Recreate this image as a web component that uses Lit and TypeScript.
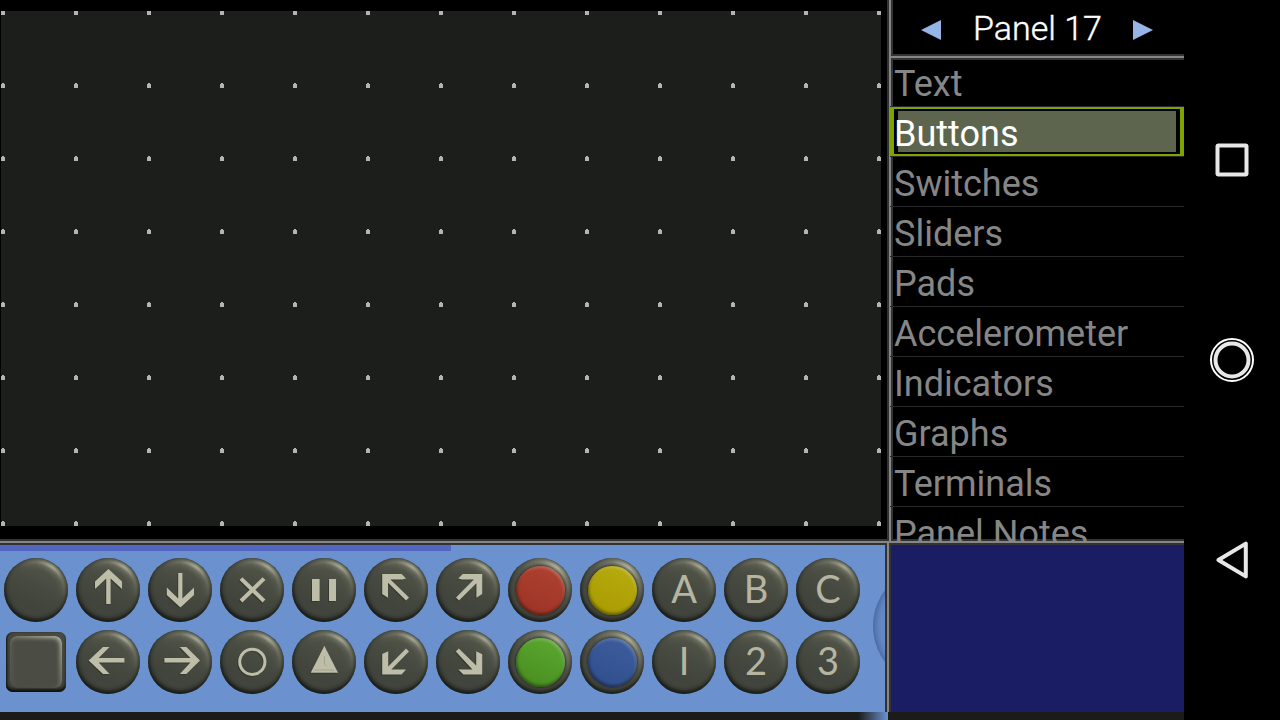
import { LitElement, html, svg, css } from "lit";
import { customElement, property, state } from "lit/decorators.js";
import { classMap } from "lit/directives/class-map.js";

interface Pad {
  id: string;
  kind: "blank" | "square" | "icon" | "lens" | "letter";
  glyph?: string;
}

const PADS: Pad[] = [
  { id: "Blank", kind: "blank" },
  { id: "Up", kind: "icon" },
  { id: "Down", kind: "icon" },
  { id: "Cross", kind: "icon" },
  { id: "Pause", kind: "icon" },
  { id: "Up left", kind: "icon" },
  { id: "Up right", kind: "icon" },
  { id: "red", kind: "lens" },
  { id: "yellow", kind: "lens" },
  { id: "Letter A", kind: "letter", glyph: "A" },
  { id: "Letter B", kind: "letter", glyph: "B" },
  { id: "Letter C", kind: "letter", glyph: "C" },
  { id: "Square", kind: "square" },
  { id: "Left", kind: "icon" },
  { id: "Right", kind: "icon" },
  { id: "Circle", kind: "icon" },
  { id: "Triangle", kind: "icon" },
  { id: "Down left", kind: "icon" },
  { id: "Down right", kind: "icon" },
  { id: "green", kind: "lens" },
  { id: "blue", kind: "lens" },
  { id: "Number 1", kind: "letter", glyph: "I" },
  { id: "Number 2", kind: "letter", glyph: "2" },
  { id: "Number 3", kind: "letter", glyph: "3" },
];

const ICONS: Record<string, unknown> = {
  Up: svg`<path d="M32.4 11 46 23.6V31l-11.4-10.4V46h-4.4V20.6L19 31v-7.4z"/>`,
  Down: svg`<path d="M32.4 49.4 46 37v-7.4L34.4 40.4V15h-4.2v25.4L18.8 29.6V37z"/>`,
  Left: svg`<path d="M12.6 30.4 27 17h6.6L22.6 28h25.8v4.6H22.6l11 11.4H27z"/>`,
  Right: svg`<path d="M52 30.6 38.4 17h-6.6l10.6 11H16.4v4.6h26L31.8 44h6.6z"/>`,
  Cross: svg`<path class="line" d="M21 20.6 44 43M44 20.6 21 43"/>`,
  Circle: svg`<circle class="ring" cx="32.3" cy="31.8" r="12.6"/>`,
  Pause: svg`<path d="M20 21h7.6v22H20zM37 21h7v22h-7z"/>`,
  Triangle: svg`<path d="M32.3 15.8 46 42.8H18.7z"/><path class="facet" d="M32.4 26v8.4l2.4 1.6M22 40h20"/>`,
  "Up left": svg`<path d="M18.2 16H37.6l4.4 4.4-3.4 1.2H26.4L45 39.4l-3 3L24 24.8V39.8L18.2 36z"/>`,
  "Up right": svg`<path d="M46.2 16H26.8l-4.6 4.4 3.4 1.2H37.8L20 39.4l3 3 17.4-17.2V39.8l5.8-3.8z"/>`,
  "Down left": svg`<path d="M18.2 44.6H37.6l4.4-5H27.4L45 21.6l-3-3-17.8 17.8V21.2L18.2 24z"/>`,
  "Down right": svg`<path d="M46.2 44.6H27.4l-5-5H36.4L19.8 21.6l3-3 17.4 17V21.2l6 3z"/>`,
};

@customElement("pad-button")
export class PadButton extends LitElement {
  @property({ attribute: false }) pad: Pad = PADS[0];

  static styles = css`
    :host {
      display: block;
    }
    .pad {
      position: relative;
      display: grid;
      place-items: center;
      width: 64px;
      height: 64px;
      padding: 0;
      border: 0;
      border-radius: 50%;
      overflow: hidden;
      color: #b5b5a1;
      font: 400 38px/60px Lato, "Liberation Sans", sans-serif;
      background: linear-gradient(205deg, #5a5c50, #474a40 45%, #41443c 70%, #484a41);
      box-shadow:
        inset 0 0 1px rgba(40, 46, 50, 0.8),
        inset 1px -3px 4px rgba(5, 8, 6, 0.75);
    }
    .pad::after {
      content: "";
      position: absolute;
      inset: 0;
      border-radius: 50%;
      background: radial-gradient(circle, transparent 20px, rgba(215, 215, 190, 0.2) 25px, rgba(215, 215, 190, 0.65) 28px, transparent 32px);
      mask-image: radial-gradient(circle at 48px 9px, #000 2px, rgba(0, 0, 0, 0.35) 16px, transparent 34px);
    }
    .letter {
      padding-bottom: 4px;
    }
    .square {
      width: 60px;
      height: 60px;
      margin: 2px;
      border-radius: 7px;
      background: linear-gradient(205deg, #4b4d44, #3d4038);
      box-shadow:
        inset 0 -3px 3px rgba(5, 8, 6, 0.8),
        inset 1px 0 2px rgba(5, 8, 6, 0.6);
    }
    .square::after {
      inset: 4px;
      border-radius: 7px;
      background: none;
      box-shadow:
        inset -2px 2px 4px rgba(200, 200, 180, 0.8),
        inset 2px 0 4px rgba(170, 175, 165, 0.4);
      mask-image: radial-gradient(circle at 46px 4px, #000 4px, rgba(0, 0, 0, 0.5) 40px, rgba(0, 0, 0, 0.3));
    }
    .square::before {
      content: "";
      width: 48px;
      height: 48px;
      border-radius: 6px;
      background: #4b4c43;
      box-shadow: 0 0 3px 1px #4b4c43;
    }
    .icon {
      display: block;
      width: 64px;
      height: 64px;
      fill: #bdbda8;
      filter: drop-shadow(-1px 1px 0 rgba(25, 28, 24, 0.35));
    }
    .line,
    .ring {
      fill: none;
      stroke: #bdbda8;
      stroke-width: 4;
    }
    .ring {
      stroke-width: 3;
    }
    .facet {
      fill: none;
      stroke: #a3a491;
      stroke-width: 1;
    }
    .lens {
      width: 49px;
      height: 49px;
      border-radius: 50%;
      box-shadow:
        0 0 2px 1px rgba(20, 22, 18, 0.5),
        inset 1px -2px 3px rgba(0, 0, 0, 0.4),
        inset -1px 2px 3px rgba(255, 255, 255, 0.15);
    }
    .rim {
      background: linear-gradient(215deg, #7a7b6c, #5a5d51 28%, #484b42 60%, #50534a);
    }
    .red { background: linear-gradient(205deg, #b14231, #993324); }
    .yellow { background: linear-gradient(205deg, #b8ac10, #a89a00); }
    .green { background: linear-gradient(205deg, #5caa32, #478b1e); }
    .blue { background: linear-gradient(205deg, #3d5e9f, #304d8a); }
  `;

  render() {
    const { id, kind, glyph } = this.pad;
    return html`<button
      class=${classMap({ pad: true, square: kind === "square", rim: kind === "lens", letter: kind === "letter" })}
      aria-label=${id}
    >
      ${kind === "icon" ? html`<svg class="icon" viewBox="0 0 64 64">${ICONS[id]}</svg>` : null}
      ${kind === "lens" ? html`<span class="lens ${id}"></span>` : null}
      ${kind === "letter" ? html`<span>${glyph}</span>` : null}
    </button>`;
  }
}

@customElement("app-root")
export class AppRoot extends LitElement {
  @state() selected = "Buttons";
  @state() panel = 17;

  private categories = [
    "Text", "Buttons", "Switches", "Sliders", "Pads",
    "Accelerometer", "Indicators", "Graphs", "Terminals", "Panel Notes",
  ];

  static styles = css`
    :host {
      display: flex;
      height: 100vh;
      overflow: hidden;
      background: #000;
      font-family: Roboto, "Liberation Sans", sans-serif;
      --edge: #333;
      --line: #868686;
    }
    button {
      margin: 0;
      padding: 0;
      border: 0;
      background: none;
      font: inherit;
      color: inherit;
      text-align: left;
    }
    svg {
      display: block;
    }
    .workspace {
      flex: 1;
      min-width: 0;
      display: flex;
      flex-direction: column;
    }
    .upper {
      flex: 1;
      min-height: 0;
      display: flex;
      background: linear-gradient(var(--edge), var(--edge)) bottom / 100% 2px no-repeat;
    }
    .stage {
      flex: 1;
      min-width: 0;
      padding: 11px 6px 15px 1px;
      box-sizing: border-box;
    }
    .grid {
      width: 100%;
      height: 100%;
      background: #1c1e1b;
    }
    .dot {
      fill: #b4b4b4;
    }
    .divider {
      flex: none;
      width: 2px;
      background: var(--line);
      border: solid var(--edge);
      border-width: 0 2px;
    }
    .sidebar {
      flex: none;
      width: 291px;
      min-height: 0;
      display: flex;
      flex-direction: column;
    }
    .header {
      flex: none;
      height: 54px;
      display: flex;
      align-items: center;
      justify-content: space-between;
      padding: 1px 31px 0 27px;
      box-sizing: border-box;
      color: #fff;
    }
    .title {
      margin: 0;
      font-size: 34px;
      font-weight: 300;
      line-height: 40px;
      -webkit-text-stroke: 0.4px #fff;
    }
    .step {
      fill: #95b5e6;
      padding-top: 4px;
    }
    .rule {
      flex: none;
      height: 2px;
      margin-left: -2px;
      background: var(--line);
      border: solid var(--edge);
      border-width: 2px 0;
    }
    .list {
      flex: 1;
      min-height: 0;
      margin: -3px 0 0 -3px;
      padding: 0;
      list-style: none;
      overflow: hidden;
      color: #868686;
      font-size: 36px;
      line-height: 49px;
    }
    .entry {
      height: 49px;
      border-bottom: 1px solid #282828;
    }
    .choice {
      display: block;
      width: 100%;
      height: 49px;
      padding: 3px 0 0 4px;
      box-sizing: border-box;
      white-space: nowrap;
    }
    .active {
      padding: 1px 0 0;
      border: solid #7ea400;
      border-width: 2px 4px;
      color: #fff;
      background: linear-gradient(#5d654e, #5d654e) center / calc(100% - 8px) calc(100% - 4px) no-repeat #000;
    }
    .crossbar {
      flex: none;
      height: 2px;
      background: var(--line);
    }
    .lower {
      flex: none;
      height: 169px;
      display: flex;
    }
    .palette {
      position: relative;
      flex: 1;
      min-width: 0;
      overflow: hidden;
      border-top: 2px solid var(--edge);
      background: #6b92cf;
    }
    .progress {
      width: 51%;
      height: 6px;
      background: #5467c0;
    }
    .pads {
      display: grid;
      grid-template-columns: repeat(12, 64px);
      gap: 8px;
      padding: 7px 4px;
    }
    .more {
      position: absolute;
      top: 21px;
      right: -108px;
      width: 120px;
      height: 120px;
      border-radius: 50%;
      background: #6488c6;
      box-shadow: inset 3px 0 5px #4c6aa2;
    }
    .preview {
      flex: none;
      width: 293px;
      border-top: 2px solid var(--edge);
      background: #1a1c64;
    }
    .footer {
      flex: none;
      height: 8px;
      padding-right: 296px;
      background: #1b1c1a;
    }
    .glow {
      width: 30px;
      height: 8px;
      margin-left: auto;
      background: linear-gradient(90deg, #1b1c1a, #6b92cf);
    }
    .system {
      flex: none;
      width: 96px;
      display: flex;
      flex-direction: column;
      align-items: center;
      justify-content: space-around;
      padding: 60px 0;
      box-sizing: border-box;
      fill: none;
      stroke: #e8e8e8;
    }
  `;

  render() {
    return html`
      <main class="workspace">
        <section class="upper">
          <div class="stage">
            <svg class="grid">
              <defs>
                <pattern id="dots" width="73" height="73" patternUnits="userSpaceOnUse">
                  <path class="dot" d="M0 0h4v4H0zM1 72h2v1H1z" />
                </pattern>
              </defs>
              <rect width="100%" height="100%" fill="url(#dots)" />
            </svg>
          </div>
          <div class="divider"></div>
          <aside class="sidebar">
            <header class="header">
              <button class="step" aria-label="Previous panel" @click=${() => this.panel--}>
                <svg width="22" height="20"><path d="M1 10 21 0v20z" /></svg>
              </button>
              <h1 class="title">Panel ${this.panel}</h1>
              <button class="step" aria-label="Next panel" @click=${() => this.panel++}>
                <svg width="20" height="20"><path d="M20 10 0 0v20z" /></svg>
              </button>
            </header>
            <div class="rule"></div>
            <ul class="list">
              ${this.categories.map(
                (name) => html`<li class="entry">
                  <button
                    class=${classMap({ choice: true, active: name === this.selected })}
                    @click=${() => (this.selected = name)}
                  >${name}</button>
                </li>`,
              )}
            </ul>
          </aside>
        </section>
        <div class="crossbar"></div>
        <section class="lower">
          <div class="palette">
            <div class="progress"></div>
            <div class="pads">${PADS.map((pad) => html`<pad-button .pad=${pad}></pad-button>`)}</div>
            <button class="more" aria-label="More buttons"></button>
          </div>
          <div class="divider"></div>
          <div class="preview"></div>
        </section>
        <footer class="footer"><div class="glow"></div></footer>
      </main>
      <nav class="system">
        <button aria-label="Recent apps">
          <svg width="44" height="44"><rect x="7.5" y="7.5" width="29" height="29" rx="1" stroke-width="4" /></svg>
        </button>
        <button aria-label="Home">
          <svg width="44" height="44">
            <circle cx="22" cy="22" r="21" stroke="#fff" stroke-width="2" />
            <circle cx="22" cy="22" r="16.5" stroke-width="4" />
          </svg>
        </button>
        <button aria-label="Back">
          <svg width="44" height="44">
            <path d="M35.8 5.6v32.8L8.4 22z" stroke-width="4" stroke-linejoin="round" />
          </svg>
        </button>
      </nav>
    `;
  }
}
